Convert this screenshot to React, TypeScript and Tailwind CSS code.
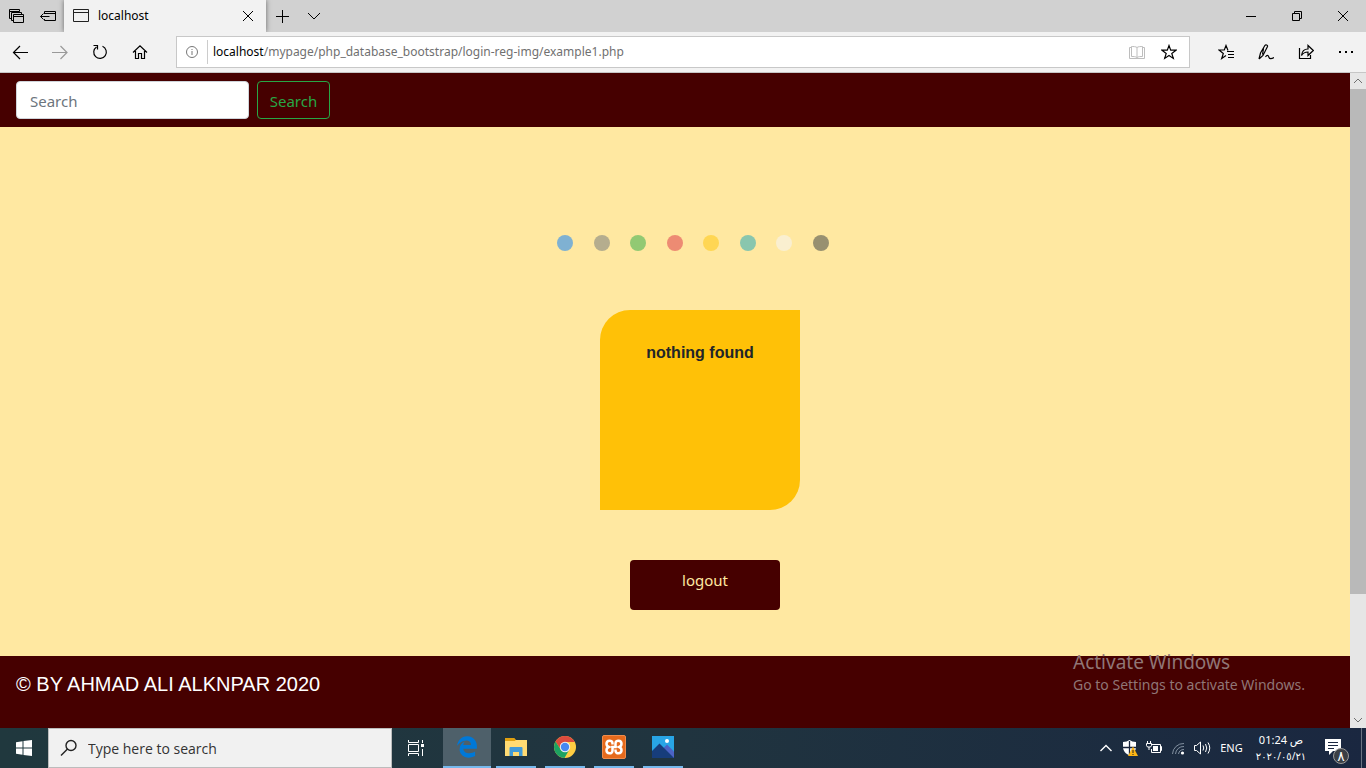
import type { ReactNode } from "react";
import { FaEdgeLegacy } from "react-icons/fa6";

const uiFont = "font-['Noto_Sans','Open_Sans',sans-serif]";

type GlyphProps = { size?: number; className?: string; width?: number; children: ReactNode };

function Glyph({ size = 16, className = "", width = 1, children }: GlyphProps) {
  return (
    <svg
      width={size}
      height={size}
      viewBox={`0 0 ${size} ${size}`}
      fill="none"
      stroke="currentColor"
      strokeWidth={width}
      className={className}
      aria-hidden="true"
    >
      {children}
    </svg>
  );
}

function IconButton({ label, className, children }: { label: string; className: string; children: ReactNode }) {
  return (
    <button type="button" aria-label={label} className={`flex shrink-0 items-center justify-center ${className}`}>
      {children}
    </button>
  );
}

function TitleBar() {
  return (
    <div className="flex h-8 shrink-0 items-stretch bg-[#d1d1d1] text-black">
      <IconButton label="Tabs you've set aside" className="w-8">
        <Glyph>
          <path d="M3.500 10.500h-2v-9h10v2M1.500 3.500h10" />
          <path d="M5.500 12.500h-2v-8h10v2" />
          <path d="M5.500 6.500h10v8h-10zM5.500 8.500h10" />
        </Glyph>
      </IconButton>
      <IconButton label="Set these tabs aside" className="w-8">
        <Glyph>
          <path d="M4.500 6V3.500h11v9h-11V11M4.500 5.500h11M0.500 8.500h9M3.500 5.500l-3 3 3 3" />
        </Glyph>
      </IconButton>
      <div className="flex w-[202px] items-center bg-[#f2f2f2] pl-2 shadow-[0_0_5px_rgba(0,0,0,0.5)]">
        <Glyph size={18} className="text-[#222]">
          <path d="M1.500 2.500h15v12h-15zM1.500 5.500h15" />
        </Glyph>
        <span className="ml-2 flex-1 text-xs">localhost</span>
        <IconButton label="Close tab" className="w-9">
          <Glyph size={12}>
            <path d="M1 1l10 10M11 1L1 11" />
          </Glyph>
        </IconButton>
      </div>
      <IconButton label="New tab" className="w-8">
        <Glyph>
          <path d="M8.500 2v13M2 8.500h13" />
        </Glyph>
      </IconButton>
      <IconButton label="Show tab previews" className="w-8">
        <Glyph>
          <path d="M2 5l6 6 6-6" />
        </Glyph>
      </IconButton>
      <div className="flex-1" />
      <IconButton label="Minimize" className="w-[46px]">
        <Glyph>
          <path d="M3 8.500h10" />
        </Glyph>
      </IconButton>
      <IconButton label="Restore" className="w-[46px]">
        <Glyph>
          <path d="M3.500 5.500h7v7h-7zM5.500 5.500v-2h7v7h-2" />
        </Glyph>
      </IconButton>
      <IconButton label="Close" className="w-[46px]">
        <Glyph>
          <path d="M3 3l10 10M13 3L3 13" />
        </Glyph>
      </IconButton>
    </div>
  );
}

function AddressBar() {
  return (
    <div className="relative flex h-[41px] shrink-0 items-center border-b border-[#c6c6c6] bg-[#f2f2f2] text-black">
      <IconButton label="Back" className="h-full w-10">
        <Glyph width={1.2}>
          <path d="M16 8.500H1.500M8 2L1.500 8.500 8 15" />
        </Glyph>
      </IconButton>
      <IconButton label="Forward" className="h-full w-10 text-[#999]">
        <Glyph width={1.2}>
          <path d="M0 8.500h15M8.500 2L15 8.500 8.500 15" />
        </Glyph>
      </IconButton>
      <IconButton label="Refresh" className="h-full w-10">
        <Glyph width={1.2}>
          <path d="M10.500 2.300a6.300 6.300 0 1 1-6 .6M1.500 1.500h4v4" />
        </Glyph>
      </IconButton>
      <IconButton label="Home" className="h-full w-10">
        <Glyph width={1.2}>
          <path d="M1 8.500L8 1.800l7 6.700M3.500 7v7.500h3v-5h3v5h3V7" />
        </Glyph>
      </IconButton>
      <div className="mx-4 flex h-8 min-w-0 flex-1 items-center border border-[#c8c8c8] bg-white">
        <span className="flex w-[30px] shrink-0 justify-center text-[#777]">
          <Glyph size={14}>
            <circle cx="7" cy="7" r="5.500" />
            <path d="M7 6v4M7 4v1" />
          </Glyph>
        </span>
        <span className="h-6 w-px bg-[#ccc]" />
        <a href="#page" className="ml-[5px] min-w-0 flex-1 truncate text-xs text-[#707070]">
          <span className="text-black">localhost</span>/mypage/php_database_bootstrap/login-reg-img/example1.php
        </a>
        <IconButton label="Reading view" className="w-8 text-[#bdbdbd]">
          <Glyph>
            <path d="M8 3.500v10M8 3.500C7 2.500 4 2.500 2.500 2.500v10c2 0 4 0 5.500 1 1.500-1 3.500-1 5.500-1v-10C12 2.500 9 2.500 8 3.500M2.500 3.500h-2v11h15v-11h-2" />
          </Glyph>
        </IconButton>
        <IconButton label="Add to favorites" className="mr-1 w-8">
          <Glyph width={1.2}>
            <path d="M8 1.500l1.700 4.600 5.300.1-4.200 3.200 1.500 5L8 11.500l-4.300 2.900 1.500-5L1 6.200l5.300-.1z" />
          </Glyph>
        </IconButton>
      </div>
      <IconButton label="Favorites" className="h-full w-10">
        <Glyph width={1.2}>
          <path d="M10 6.500L8 1.500 6.300 6H1l4.300 3.500-1.600 5L8 11.500M9 7.500h7M10 10.500h6M10 13.500h6" />
        </Glyph>
      </IconButton>
      <IconButton label="Add notes" className="h-full w-10">
        <Glyph width={1.2}>
          <path d="M1 15l1.500-6L7 1.300c.8-1 3-.2 2.500 1.200L5 11.500 1 15M5.500 4.500l-1 6M7.500 13c2-3 3-1 3.500.5s2.500 1.500 5 0" />
        </Glyph>
      </IconButton>
      <IconButton label="Share" className="h-full w-10">
        <Glyph width={1.2}>
          <path d="M1.500 4v10.500h11V11M3.500 11.500C4 7 6 5 10 5V1.500l5.300 5-5.300 5V8C7 8 5 9 3.500 11.500z" />
        </Glyph>
      </IconButton>
      <IconButton label="Settings and more" className="h-full w-10">
        <Glyph>
          <path d="M1 8h2M7 8h2M13 8h2" strokeWidth="2" />
        </Glyph>
      </IconButton>
    </div>
  );
}

const dots = [
  "bg-[#7fb1d2]",
  "bg-[#b5ad8e]",
  "bg-[#92c973]",
  "bg-[#ed8b73]",
  "bg-[#ffd653]",
  "bg-[#89c6ae]",
  "bg-[#faefd0]",
  "bg-[#989070]",
];

function Page() {
  return (
    <div id="page" className="flex min-w-0 flex-1 flex-col bg-[#ffe8a1]">
      <nav className="bg-[#460000] px-4 py-2">
        <form className="flex gap-2" onSubmit={(e) => e.preventDefault()}>
          <input
            type="search"
            placeholder="Search"
            aria-label="Search"
            className="h-[38px] w-[233px] rounded border border-[#ced4da] bg-white px-[13px] pt-0.5 text-[15px] text-[#495057] placeholder:text-[#6c757d]"
          />
          <button
            type="submit"
            className="h-[38px] w-[73px] rounded border border-[#28a745] pt-0.5 text-[15px] text-[#28a745]"
          >
            Search
          </button>
        </form>
      </nav>
      <main className="flex flex-1 flex-col items-center pt-[108px]">
        <div className="pl-9">
          <div className="flex w-[272px] justify-between">
            {dots.map((color) => (
              <span key={color} className={`size-4 rounded-full ${color}`} />
            ))}
          </div>
        </div>
        <div className="pt-[59px] pl-[50px]">
          <div className="size-[200px] rounded-tl-[30px] rounded-br-[30px] bg-[#ffc107] pt-[31px] text-center font-['Liberation_Sans',sans-serif] text-base font-bold text-[#212529]">
            nothing found
          </div>
        </div>
        <div className="pt-[50px] pl-[60px]">
          <a
            href="#logout"
            className="block h-[50px] w-[150px] rounded bg-[#460000] pt-[9px] text-center text-[15px] text-[#ffe8a1]"
          >
            logout
          </a>
        </div>
      </main>
      <footer className="relative h-[72px] bg-[#460000] px-4 pt-[14px] font-['Liberation_Sans',sans-serif] text-xl text-white">
        © BY AHMAD ALI ALKNPAR 2020
        <div className={`absolute -top-2 right-[41px] w-[236px] whitespace-nowrap text-[#907676] ${uiFont}`}>
          <p className="text-[19px] leading-7">Activate Windows</p>
          <p className="text-sm leading-[18px]">Go to Settings to activate Windows.</p>
        </div>
      </footer>
    </div>
  );
}

function ScrollBar() {
  return (
    <div className="flex w-4 shrink-0 flex-col bg-[#e6e6e6] text-[#707070]">
      <IconButton label="Scroll up" className="h-4">
        <Glyph size={10}>
          <path d="M1 7l4-4 4 4" />
        </Glyph>
      </IconButton>
      <div className="flex flex-1 flex-col">
        <div className="flex-[505] bg-[#b9b9b9]" />
        <div className="flex-[118]" />
      </div>
      <IconButton label="Scroll down" className="h-4">
        <Glyph size={10}>
          <path d="M1 3l4 4 4-4" />
        </Glyph>
      </IconButton>
    </div>
  );
}

function AppButton({ label, active = false, children }: { label: string; active?: boolean; children: ReactNode }) {
  return (
    <button
      type="button"
      aria-label={label}
      className={`flex w-12 shrink-0 flex-col items-center ${active ? "bg-[#4e606a]" : ""}`}
    >
      <span className="flex flex-1 items-center justify-center">{children}</span>
      <span className={`h-0.5 bg-[#76b9ed] ${active ? "w-12" : "w-10"}`} />
    </button>
  );
}

function Taskbar() {
  return (
    <div className="flex h-10 shrink-0 bg-linear-to-r from-[#20383e] via-[#20343f] to-[#1a2740] text-white">
      <IconButton label="Start" className="w-12">
        <svg width="16" height="16" viewBox="0 0 16 16" fill="currentColor" aria-hidden="true">
          <path d="M0 2.200L6.500 1.300V7.500H0zM7.500 1.100L16 0v7.500H7.500zM0 8.500h6.500v6.200L0 13.800zM7.500 8.500H16V16l-8.500-1.100z" />
        </svg>
      </IconButton>
      <label className="flex w-[344px] items-center border border-[#bcbcbc] bg-[#f1f1f1] pl-[11px] text-[#222]">
        <Glyph size={18} width={1.4}>
          <circle cx="11" cy="6.500" r="5" />
          <path d="M7.500 10L1 16.500" />
        </Glyph>
        <input
          type="text"
          aria-label="Type here to search"
          placeholder="Type here to search"
          className="ml-2.5 min-w-0 flex-1 bg-transparent pt-0.5 font-['Open_Sans',sans-serif] text-sm placeholder:text-[#333]"
        />
      </label>
      <IconButton label="Task view" className="w-12">
        <Glyph size={18}>
          <path d="M1.500 1v2.500h10V1M1.500 17v-2.500h10V17M1.500 5.500h10v7h-10zM15.500 1v3M15.500 10v7" />
          <path d="M14 5h3v3h-3z" fill="currentColor" stroke="none" />
        </Glyph>
      </IconButton>
      <div className="ml-[3px] flex gap-px">
        <AppButton label="Microsoft Edge" active>
          <FaEdgeLegacy className="size-[22px] text-[#0078d7]" />
        </AppButton>
        <AppButton label="File Explorer">
          <svg width="22" height="20" viewBox="0 0 22 20" aria-hidden="true">
            <path d="M0 1h9l2 2h10.500v14H0z" fill="#e4a30b" />
            <path d="M0 4h9.500l1.500-1h11v16H0z" fill="#ffdb73" />
            <path d="M0 1h9l1.500 1.500L9 4H0z" fill="#e0a010" />
            <path d="M4.500 11q0-1 1-1h11q1 0 1 1v8h-3.500v-4H8v4H4.500z" fill="#3f9ad9" />
          </svg>
        </AppButton>
        <AppButton label="Google Chrome">
          <svg width="22" height="22" viewBox="0 0 22 22" aria-hidden="true">
            <circle cx="11" cy="11" r="11" fill="#ffcd42" />
            <path d="M1.500 5.500A11 11 0 0 1 20.500 5.500L20.800 6H11L6.700 13.500z" fill="#dc4b3e" />
            <path d="M1.500 5.500A11 11 0 0 0 10.500 22L15.400 13.500H6.700L1.500 5.500z" fill="#1da261" />
            <circle cx="11" cy="11" r="5.200" fill="#f1f1f1" />
            <circle cx="11" cy="11" r="4.200" fill="#4688f1" />
          </svg>
        </AppButton>
        <AppButton label="XAMPP">
          <svg width="24" height="24" viewBox="0 0 24 24" aria-hidden="true">
            <rect x="0.500" y="0.500" width="23" height="23" rx="1.500" fill="#e66a1c" stroke="#ee8c4c" />
            <path
              d="M10.500 9.500V8.500C10.500 4.500 4.500 5 4.500 8.700Q4.500 11 6.800 12 4.500 13 4.500 15.300C4.500 19 10.500 19.500 10.500 15.500V12H13.500V8.500C13.500 4.500 19.500 5 19.500 8.700Q19.500 11 17.200 12 19.500 13 19.500 15.300C19.500 19 13.500 19.500 13.500 15.500V14.500"
              fill="none"
              stroke="#fff"
              strokeWidth="2.500"
            />
          </svg>
        </AppButton>
        <AppButton label="Photos">
          <svg width="22" height="22" viewBox="0 0 22 22" aria-hidden="true">
            <path d="M0 0h22v22H0z" fill="#28a5e6" />
            <path d="M9 14.500L15 8.500l7 7V22H11z" fill="#4c63c5" />
            <path d="M0 15l7.500-7.500L22 22H0z" fill="#173d7b" />
            <circle cx="15" cy="5" r="2" fill="#fff" />
          </svg>
        </AppButton>
      </div>
      <div className="flex-1" />
      <IconButton label="Show hidden icons" className="w-6">
        <Glyph width={1.4}>
          <path d="M2.500 11L8 5.500l5.500 5.500" />
        </Glyph>
      </IconButton>
      <IconButton label="Windows Security" className="w-6">
        <svg width="16" height="16" viewBox="0 0 16 16" aria-hidden="true">
          <path d="M7.500 0Q10 2 14 2v5c0 4-3 7-6.500 8.500C4 14 1 11 1 7V2q4 0 6.500-2z" fill="#fff" />
          <path d="M7.500 1v14M1 7.500h13" stroke="#17233a" strokeWidth="1.300" />
          <path d="M11 6.500L16 16H6z" fill="#fdb515" />
          <path d="M11 10v3M11 14v1" stroke="#222" />
        </svg>
      </IconButton>
      <IconButton label="Battery" className="w-6">
        <Glyph>
          <path d="M6 4.500h8.500v8h-9V9M14.500 6.500h1v4h-1M1.500 1v2M4.500 1v2M0.500 3.500h5v2l-1 1.500h-3l-1-1.500zM3 7v3" />
          <path d="M7 6h5v5H7z" fill="currentColor" stroke="none" />
        </Glyph>
      </IconButton>
      <IconButton label="Network" className="w-6">
        <Glyph>
          <path d="M2.500 14A11 11 0 0 1 14 3.500M5.500 14A8 8 0 0 1 14 6.500M8.500 14A5.500 5.500 0 0 1 14 9.500" stroke="#8290a0" />
          <circle cx="12.500" cy="13" r="1.600" fill="currentColor" stroke="none" />
        </Glyph>
      </IconButton>
      <IconButton label="Volume" className="w-6">
        <Glyph size={18}>
          <path d="M1.500 6.500h2l4-3.500v12l-4-3.500h-2zM10 6.500q1.500 2.500 0 5M12.500 5q2.500 4 0 8M15 3.500q3.500 5.500 0 11" />
        </Glyph>
      </IconButton>
      <button type="button" className="w-[35px] text-[11px]">
        ENG
      </button>
      <button
        type="button"
        className="flex w-16 flex-col items-center justify-center font-['Noto_Sans','DejaVu_Sans',sans-serif] text-[11px] leading-[17px] whitespace-nowrap"
      >
        <span>01:24 ص</span>
        <span className="text-[10px]">٢٠٢٠/٠٥/٢١</span>
      </button>
      <button type="button" aria-label="Notifications" className="relative flex w-12 items-start pt-[11px] pl-3">
        <svg width="17" height="17" viewBox="0 0 17 17" aria-hidden="true">
          <path d="M0 0h16v12H8l-4 4v-4H0z" fill="#fff" />
          <path d="M3 3.500h10M3 6.500h10M3 9.500h6" stroke="#1a2740" />
        </svg>
        <span className="absolute top-5 left-5 flex size-4 items-center justify-center rounded-full border border-[#999] bg-[#3b3f45] font-['DejaVu_Sans',sans-serif] text-sm">
          ٨
        </span>
      </button>
      <button type="button" aria-label="Show desktop" className="w-[5px] border-l border-[#6a7483]" />
    </div>
  );
}

export default function App() {
  return (
    <div className={`flex h-screen flex-col overflow-hidden ${uiFont}`}>
      <TitleBar />
      <AddressBar />
      <div className="flex min-h-0 flex-1">
        <Page />
        <ScrollBar />
      </div>
      <Taskbar />
    </div>
  );
}
